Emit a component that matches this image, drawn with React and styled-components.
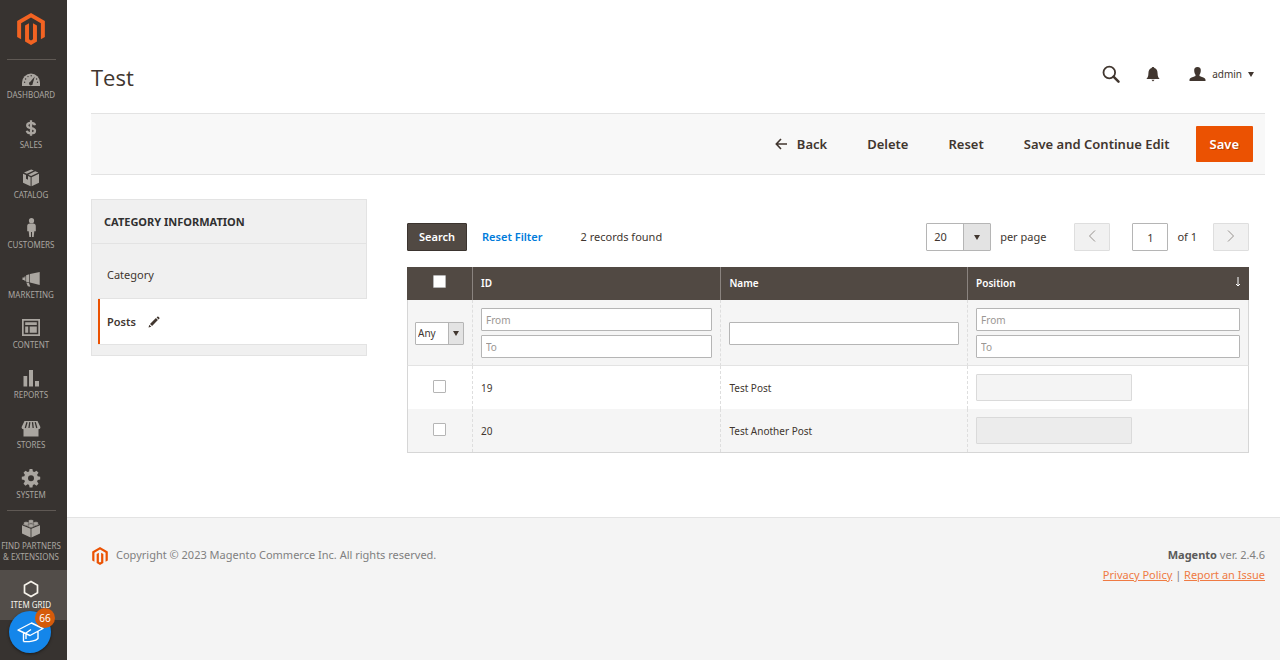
import React from "react";
import styled, { createGlobalStyle, css } from "styled-components";

const GlobalStyle = createGlobalStyle`
  *, *::before, *::after { box-sizing: border-box; }
  body {
    margin: 0;
    background: #fff;
    color: #41362f;
    font: 11px/16px "Noto Sans", "Open Sans", sans-serif;
  }
  button, input, select { font: inherit; color: inherit; border-radius: 1px; }
  button { cursor: pointer; }
`;

const Layout = styled.div`
  display: flex;
  min-height: 100vh;
`;

/* ---------- Side menu ---------- */

const Sidebar = styled.nav`
  flex: 0 0 67px;
  background: #373330;
`;

const LogoLink = styled.a`
  display: flex;
  justify-content: center;
  padding: 13px 5px 14px 0;
  color: #f26322;
  svg { display: block; }
`;

const Separator = styled.hr`
  height: 1px;
  margin: 0 11px 0 7px;
  border: 0;
  background: #5f5954;
`;

const MenuItem = styled.a`
  display: flex;
  flex-direction: column;
  align-items: center;
  min-height: 50px;
  padding: 8px 5px 8px 0;
  text-decoration: none;
  text-align: center;
  text-transform: uppercase;
  white-space: nowrap;
  font-size: 8px;
  line-height: 11px;
  color: ${(p) => (p.$active ? "#f7f3eb" : "#aaa6a0")};
  background: ${(p) => (p.$active ? "#524d49" : "transparent")};
  svg { display: block; margin-bottom: 1px; }
`;

const MenuLabel = styled.span`
  display: block;
`;

/* ---------- Page header ---------- */

const Main = styled.div`
  flex: 1;
  min-width: 0;
  display: flex;
  flex-direction: column;
`;

const Header = styled.header`
  display: flex;
  justify-content: space-between;
  align-items: flex-start;
  padding: 63px 26px 22px 24px;
`;

const Title = styled.h1`
  margin: 0;
  font-family: "Open Sans", "Noto Sans", sans-serif;
  font-size: 22px;
  line-height: 28px;
  font-weight: 400;
`;

const Tools = styled.div`
  display: flex;
  align-items: center;
  height: 22px;
`;

const ToolButton = styled.button`
  display: flex;
  align-items: center;
  gap: 6px;
  margin-left: ${(p) => p.$gap || 0}px;
  padding: 0;
  border: 0;
  background: none;
  font-size: 10px;
  color: #41362f;
`;

const ActionBar = styled.div`
  display: flex;
  justify-content: flex-end;
  align-items: center;
  gap: 12px;
  margin: 0 15px 0 24px;
  padding: 12px;
  background: #f8f8f8;
  border: solid #e3e3e3;
  border-width: 1px 0;
`;

const ActionButton = styled.button`
  display: flex;
  align-items: center;
  gap: 10px;
  height: 36px;
  padding: 0 14px;
  border: 0;
  background: none;
  font-size: 13px;
  font-weight: 600;
  ${(p) =>
    p.$primary &&
    css`
      background: #eb5202;
      color: #fff;
      text-shadow: 1px 1px 0 rgba(0, 0, 0, 0.25);
    `}
`;

/* ---------- Content ---------- */

const Content = styled.main`
  display: flex;
  align-items: flex-start;
  gap: 40px;
  padding: 24px 31px 64px 24px;
`;

const Aside = styled.aside`
  flex: 0 0 276px;
  padding-bottom: 10px;
  background: #f0f0f0;
  border: 1px solid #e3e3e3;
`;

const AsideTitle = styled.h2`
  margin: 0;
  padding: 14px 12px 13px;
  font-size: 11px;
  line-height: 16px;
  font-weight: 700;
  color: #303030;
  text-transform: uppercase;
  border-bottom: 1px solid #e3e3e3;
`;

const TabList = styled.div`
  padding: 8px 0 0 6px;
`;

const Tab = styled.a`
  display: flex;
  align-items: center;
  gap: 12px;
  height: ${(p) => (p.$active ? 47 : 46)}px;
  padding-left: 9px;
  color: #41362f;
  text-decoration: none;
  ${(p) =>
    p.$active &&
    css`
      margin-right: -1px;
      background: #fff;
      border: solid #e3e3e3;
      border-width: 1px 0;
      box-shadow: inset 2px 0 0 #eb5202;
      font-weight: 600;
    `}
`;

const Grid = styled.section`
  flex: 1;
  min-width: 0;
  padding-top: 24px;
`;

const Toolbar = styled.div`
  display: flex;
  align-items: center;
  height: 28px;
  margin-bottom: 16px;
`;

const SearchButton = styled.button`
  height: 28px;
  padding: 0 11px;
  border: 1px solid #3b342f;
  background: #514943;
  color: #fff;
  font-weight: 600;
`;

const LinkButton = styled.button`
  margin-left: 15px;
  padding: 0;
  border: 0;
  background: none;
  color: #007bdb;
  font-weight: 600;
`;

const Records = styled.span`
  margin-left: 38px;
`;

const Pager = styled.div`
  display: flex;
  align-items: center;
  margin-left: auto;
`;

const SelectBox = styled.span`
  position: relative;
  display: block;
  width: ${(p) => p.$width}px;
  select {
    display: block;
    width: 100%;
    height: ${(p) => p.$height}px;
    padding: 0 0 0 ${(p) => p.$pad}px;
    appearance: none;
    background: #fff;
    border: 1px solid #b5b5b5;
  }
`;

const SelectArrow = styled.span`
  position: absolute;
  top: 1px;
  right: 1px;
  bottom: 1px;
  width: ${(p) => p.$width}px;
  display: flex;
  align-items: center;
  justify-content: center;
  background: #e3e3e3;
  border-left: 1px solid #b5b5b5;
  pointer-events: none;
`;

const PerPage = styled.label`
  display: flex;
  align-items: center;
  gap: 9px;
  margin-right: 28px;
`;

const PageButton = styled.button`
  display: flex;
  align-items: center;
  justify-content: center;
  width: 36px;
  height: 28px;
  padding: 0 0 2px;
  border: 1px solid #dedede;
  background: #f1f1f1;
  color: #97928e;
`;

const PageLabel = styled.label`
  display: flex;
  align-items: center;
  gap: 9px;
  margin: 0 16px 0 22px;
  input {
    width: 36px;
    height: 28px;
    padding: 0;
    border: 1px solid #b5b5b5;
    text-align: center;
  }
`;

const Table = styled.table`
  width: 100%;
  table-layout: fixed;
  border-collapse: separate;
  border-spacing: 0;
  border-bottom: 1px solid #d6d6d6;
  font-size: 10px;
`;

const Col = styled.col`
  width: ${(p) => p.$width};
`;

const HeadCell = styled.th`
  height: 33px;
  padding: 0 8px 2px;
  background: #514943;
  color: #fff;
  text-align: ${(p) => (p.$center ? "center" : "left")};
  font-weight: 600;
  & + & { border-left: 1px solid #8a837f; }
`;

const HeadLabel = styled.span`
  display: flex;
  justify-content: space-between;
  align-items: center;
  svg { margin-bottom: 2px; }
`;

const Row = styled.tr`
  background: ${(p) => (p.$shade ? "#f5f5f5" : "#fff")};
`;

const Cell = styled.td`
  height: 43px;
  padding: 0 8px;
  text-align: ${(p) => (p.$center ? "center" : "left")};
  border-left: 1px dashed #dedede;
  &:first-child { padding-left: 7px; border-left: 1px solid #d6d6d6; }
  &:last-child { border-right: 1px solid #d6d6d6; }
`;

const FilterCell = styled(Cell)`
  height: 66px;
  padding: 8px 8px 7px;
  border-bottom: 1px solid #e3e3e3;
`;

const Stack = styled.div`
  display: grid;
  gap: 4px;
`;

const TextInput = styled.input`
  display: block;
  width: 100%;
  height: 23px;
  padding: 0 4px;
  background: #fff;
  border: 1px solid #b5b5b5;
  &::placeholder { color: #9b9793; opacity: 1; }
`;

const PositionInput = styled.input`
  display: block;
  width: 156px;
  height: 27px;
  padding: 0 8px;
  border: 1px solid #dadada;
  background: ${(p) => (p.$shade ? "#ececec" : "#f4f4f4")};
`;

const Checkbox = styled.input`
  display: block;
  width: 13px;
  height: 13px;
  margin: 0 auto 2px;
  appearance: none;
  background: #fff;
  border: 1px solid #b5b5b5;
  &:checked { background: #514943; }
`;

/* ---------- Footer ---------- */

const Footer = styled.footer`
  flex: 1;
  display: flex;
  justify-content: space-between;
  align-items: flex-start;
  padding: 27px 15px 64px 24px;
  background: #f4f4f4;
  border-top: 1px solid #e3e3e3;
  line-height: 20px;
  color: #808080;
`;

const Copyright = styled.div`
  display: flex;
  gap: 7px;
  svg { display: block; margin-top: 2px; color: #eb5202; }
`;

const Version = styled.div`
  text-align: right;
  strong { color: #5a5a5a; font-weight: 700; }
  a { color: #ef7a43; text-decoration: underline; }
`;

/* ---------- Guide launcher ---------- */

const Guide = styled.button`
  position: fixed;
  left: 9px;
  bottom: 7px;
  display: flex;
  align-items: center;
  justify-content: center;
  width: 42px;
  height: 42px;
  padding: 0;
  border: 0;
  border-radius: 50%;
  background: #1486ea;
  color: #fff;
  box-shadow: 0 1px 3px rgba(0, 0, 0, 0.5);
`;

const Badge = styled.span`
  position: absolute;
  top: -3px;
  right: -4px;
  width: 20px;
  height: 20px;
  border-radius: 50%;
  background: #d55b0b;
  font-size: 10px;
  line-height: 20px;
`;

/* ---------- Icons ---------- */

const Icon = ({ size = 20, w, h, box, children }) => (
  <svg width={w || size} height={h || size} viewBox={box || `0 0 ${w || size} ${h || size}`} fill="currentColor" aria-hidden="true">
    {children}
  </svg>
);

const MagentoLogo = ({ size }) => (
  <Icon size={size} box="0 0 24 24">
    <path d="M12 24l-4.455-2.572v-12l2.97-1.715v12.001l1.485.902 1.485-.902V7.713l2.971 1.715v12L12 24zM22.391 6v12l-2.969 1.714V7.713L12 3.43 4.574 7.713v12.001L1.609 18V6L12 0l10.391 6z" />
  </Icon>
);

const Caret = () => (
  <Icon w={6} h={5}>
    <path d="M0 0h6L3 5z" />
  </Icon>
);

const dark = "#373330";

const icons = {
  dashboard: (
    <Icon>
      <path d="M1 18v-3.500a9 9 0 0 1 18 0V18z" />
      <g fill={dark}>
        <path d="M13.800 8.500l-2 6.800a1.900 1.900 0 1 1-2.500-1.600z" />
        <circle cx="3.600" cy="14.300" r=".7" />
        <circle cx="4.600" cy="11" r=".7" />
        <circle cx="7" cy="8.600" r=".7" />
        <circle cx="10.200" cy="7.800" r=".7" />
        <circle cx="15.600" cy="11" r=".7" />
        <circle cx="16.500" cy="14.300" r=".7" />
      </g>
    </Icon>
  ),
  sales: (
    <Icon>
      <path
        d="M14 7.200C13.600 5.500 12 4.800 10 4.800c-2.300 0-3.800 1-3.800 2.600 0 3.800 7.800 1.600 7.800 5.300 0 1.700-1.500 2.700-4 2.700-2.200 0-3.800-.9-4.200-2.700M10 2.200v15.600"
        fill="none"
        stroke="currentColor"
        strokeWidth="2.300"
      />
    </Icon>
  ),
  catalog: (
    <Icon>
      <path d="M10.200 1.500l2.600 1.100-6.900 3.200-2.900-1.200zM14.200 3.200l3.200 1.400L10.100 8 7.200 6.800zM2 5.800l3 1.300v3.700l2 .9V8l2.600 1.200v9.100L2 14.800zM18 5.800v9l-7.400 3.500V9.200z" />
    </Icon>
  ),
  customers: (
    <Icon>
      <circle cx="10.500" cy="2.700" r="2.600" />
      <path d="M8.800 5.500h3.400c1.600 0 2.600 1 2.600 2.800v5h-1.500L12.700 19H11v-5h-1v5H8.300l-.6-5.700H6.200v-5c0-1.800 1-2.800 2.600-2.800z" />
    </Icon>
  ),
  marketing: (
    <Icon>
      <path d="M18.700 4v13L9 14.600V6zM8.300 6.200v8.200l-3.200-.6V7.200zM4.500 8.200v5l-1-.3V12H1.500V9.500h2V8.400zM5.300 14.500l2.700.5 1.300 3.700-2.500-.4z" />
    </Icon>
  ),
  content: (
    <Icon>
      <path fillRule="evenodd" d="M1 1h18v17H1zM2.700 2.700v13.600h14.600V2.700zM4.200 4.200h11.600V7H4.200zM4.200 8.600h3v6.200h-3zM8.700 8.600h7.100v6.200H8.700z" />
    </Icon>
  ),
  reports: (
    <Icon>
      <path d="M2.500 8h3.700v10.500H2.500zM8 2h4v16.500H8zM14 13h4v5.500h-4z" />
    </Icon>
  ),
  stores: (
    <Icon>
      <path d="M3.500 3h13l2.900 6c0 1.500-.7 2.200-1.900 2.200V18.500h-15v-7.300C1.300 11.200.6 10.500.6 9z" />
      <path d="M6 4.200L4.300 10M8.800 4.200L8 10M11.500 4.200l.7 5.800M14.200 4.200l1.600 5.800" stroke={dark} strokeWidth="1.300" />
    </Icon>
  ),
  system: (
    <Icon>
      <path
        fillRule="evenodd"
        d="M8.600 1h2.800l.5 2.500 1.500.6 2.100-1.400 2 2-1.400 2.100.6 1.500 2.500.5v2.800l-2.500.5-.6 1.500 1.400 2.100-2 2-2.100-1.400-1.500.6-.5 2.500H8.600l-.5-2.500-1.500-.6-2.100 1.400-2-2 1.400-2.100-.6-1.500L.8 11.600V8.800l2.500-.5.6-1.500-1.400-2.100 2-2 2.100 1.400 1.500-.6zM10 7.200a3 3 0 1 0 0 6 3 3 0 0 0 0-6z"
      />
    </Icon>
  ),
  partners: (
    <Icon>
      <path d="M1 6.200l8.600 3.600v8.700L1 14.600zM19 6.200v8.400l-8.600 3.900V9.800zM1.800 5.300L10 2l8.200 3.300L10 8.800z" />
      <g stroke={dark} strokeWidth=".4">
        <path d="M7.600 1.600v1.800c0 1.300 4.800 1.300 4.800 0V1.600c0-1.300-4.800-1.300-4.800 0zM2.800 3.700v1.700c0 1.300 4.600 1.300 4.600 0V3.700c0-1.200-4.600-1.200-4.600 0zM12.600 3.700v1.700c0 1.300 4.600 1.300 4.600 0V3.700c0-1.200-4.600-1.200-4.600 0zM7.700 5.800v1.700c0 1.300 4.600 1.300 4.600 0V5.800c0-1.300-4.600-1.300-4.600 0z" />
      </g>
    </Icon>
  ),
  hexagon: (
    <Icon>
      <path d="M10 3.600l6.500 3.700v7.500L10 18.500l-6.500-3.700V7.300z" fill="none" stroke="currentColor" strokeWidth="1.700" />
    </Icon>
  ),
};

const menu = [
  ["dashboard", "Dashboard"],
  ["sales", "Sales"],
  ["catalog", "Catalog"],
  ["customers", "Customers"],
  ["marketing", "Marketing"],
  ["content", "Content"],
  ["reports", "Reports"],
  ["stores", "Stores"],
  ["system", "System"],
];

const posts = [
  { id: 19, name: "Test Post" },
  { id: 20, name: "Test Another Post" },
];

const RangeFilter = ({ label }) => (
  <Stack>
    <TextInput placeholder="From" aria-label={`${label} from`} />
    <TextInput placeholder="To" aria-label={`${label} to`} />
  </Stack>
);

export default function App() {
  return (
    <Layout>
      <GlobalStyle />
      <Sidebar>
        <LogoLink href="#" aria-label="Magento">
          <MagentoLogo size={32} />
        </LogoLink>
        <Separator />
        {menu.map(([icon, label]) => (
          <MenuItem href="#" key={icon}>
            {icons[icon]}
            <MenuLabel>{label}</MenuLabel>
          </MenuItem>
        ))}
        <Separator />
        <MenuItem href="#">
          {icons.partners}
          <MenuLabel>
            Find Partners
            <br />& Extensions
          </MenuLabel>
        </MenuItem>
        <MenuItem href="#" $active>
          {icons.hexagon}
          <MenuLabel>Item Grid</MenuLabel>
        </MenuItem>
      </Sidebar>

      <Main>
        <Header>
          <Title>Test</Title>
          <Tools>
            <ToolButton aria-label="Search">
              <Icon size={18}>
                <circle cx="7.300" cy="7.500" r="5.800" fill="none" stroke="currentColor" strokeWidth="1.800" />
                <path d="M11.500 11.700l5 5" stroke="currentColor" strokeWidth="2.400" strokeLinecap="round" />
              </Icon>
            </ToolButton>
            <ToolButton aria-label="Notifications" $gap={26}>
              <Icon w={14} h={16}>
                <path d="M7 1c.8 0 1.300.4 1.400 1.100C10.800 2.800 11.500 5 11.600 7.500c.1 2.500.4 3.700 2 5.500H.4c1.600-1.800 1.900-3 2-5.500C2.500 5 3.200 2.800 5.600 2.100 5.700 1.400 6.200 1 7 1zM5.400 13.800h3.200L7 15.600z" />
              </Icon>
            </ToolButton>
            <ToolButton $gap={29}>
              <Icon size={17}>
                <path d="M8.500 1c2.300 0 3.500 1.200 3.300 3.800-.1 1.800-.6 3.100-1.300 4v1.200c1 .9 6 1.300 6 3.700V15H.5v-1.300c0-2.400 5-2.800 6-3.700V8.800c-.7-.9-1.200-2.200-1.300-4C5 2.200 6.200 1 8.500 1z" />
              </Icon>
              <span>admin</span>
              <Caret />
            </ToolButton>
          </Tools>
        </Header>

        <ActionBar>
          <ActionButton>
            <Icon w={12} h={12}>
              <path d="M6 1L1.300 6 6 11M1.500 6H12" fill="none" stroke="currentColor" strokeWidth="1.600" />
            </Icon>
            Back
          </ActionButton>
          <ActionButton>Delete</ActionButton>
          <ActionButton>Reset</ActionButton>
          <ActionButton>Save and Continue Edit</ActionButton>
          <ActionButton $primary>Save</ActionButton>
        </ActionBar>

        <Content>
          <Aside>
            <AsideTitle>Category Information</AsideTitle>
            <TabList>
              <Tab href="#">Category</Tab>
              <Tab href="#" $active>
                Posts
                <Icon size={12}>
                  <path d="M.5 11.500l.8-2.700L3.300 10.700zM2 7.900L7.900 2.100l2 2L4.100 10zM8.600 1.400L9.600.5c.5-.5 2.400 1.400 1.900 1.900l-.9 1z" />
                </Icon>
              </Tab>
            </TabList>
          </Aside>

          <Grid>
            <Toolbar>
              <SearchButton>Search</SearchButton>
              <LinkButton>Reset Filter</LinkButton>
              <Records>2 records found</Records>
              <Pager>
                <PerPage>
                  <SelectBox $width={65} $height={28} $pad={7}>
                    <select defaultValue="20">
                      <option>20</option>
                      <option>50</option>
                    </select>
                    <SelectArrow $width={27}>
                      <Caret />
                    </SelectArrow>
                  </SelectBox>
                  per page
                </PerPage>
                <PageButton aria-label="Previous page">
                  <Icon w={8} h={14}>
                    <path d="M7 1.500L1.500 7 7 12.500" fill="none" stroke="currentColor" />
                  </Icon>
                </PageButton>
                <PageLabel>
                  <input defaultValue="1" aria-label="Page" />
                  of 1
                </PageLabel>
                <PageButton aria-label="Next page">
                  <Icon w={8} h={14}>
                    <path d="M1 1.500L6.500 7 1 12.500" fill="none" stroke="currentColor" />
                  </Icon>
                </PageButton>
              </Pager>
            </Toolbar>

            <Table>
              <colgroup>
                <Col $width="65px" />
                <Col $width="29.500%" />
                <Col $width="29.300%" />
                <Col />
              </colgroup>
              <thead>
                <tr>
                  <HeadCell $center>
                    <Checkbox type="checkbox" aria-label="Select all" />
                  </HeadCell>
                  <HeadCell>ID</HeadCell>
                  <HeadCell>Name</HeadCell>
                  <HeadCell>
                    <HeadLabel>
                      Position
                      <Icon w={6} h={14}>
                        <path d="M3 2v9M1 9l2 2 2-2" fill="none" stroke="currentColor" />
                      </Icon>
                    </HeadLabel>
                  </HeadCell>
                </tr>
              </thead>
              <tbody>
                <Row $shade>
                  <FilterCell>
                    <SelectBox $width={49} $height={23} $pad={2}>
                      <select aria-label="Selection" defaultValue="Any">
                        <option>Any</option>
                        <option>Yes</option>
                        <option>No</option>
                      </select>
                      <SelectArrow $width={15}>
                        <Caret />
                      </SelectArrow>
                    </SelectBox>
                  </FilterCell>
                  <FilterCell>
                    <RangeFilter label="ID" />
                  </FilterCell>
                  <FilterCell>
                    <TextInput aria-label="Name" />
                  </FilterCell>
                  <FilterCell>
                    <RangeFilter label="Position" />
                  </FilterCell>
                </Row>
                {posts.map((post, i) => (
                  <Row key={post.id} $shade={i % 2 === 1}>
                    <Cell $center>
                      <Checkbox type="checkbox" aria-label={`Select ${post.name}`} />
                    </Cell>
                    <Cell>{post.id}</Cell>
                    <Cell>{post.name}</Cell>
                    <Cell>
                      <PositionInput disabled $shade={i % 2 === 1} aria-label={`Position of ${post.name}`} />
                    </Cell>
                  </Row>
                ))}
              </tbody>
            </Table>
          </Grid>
        </Content>

        <Footer>
          <Copyright>
            <MagentoLogo size={18} />
            Copyright © 2023 Magento Commerce Inc. All rights reserved.
          </Copyright>
          <Version>
            <strong>Magento</strong> ver. 2.4.6
            <br />
            <a href="#">Privacy Policy</a> | <a href="#">Report an Issue</a>
          </Version>
        </Footer>
      </Main>

      <Guide aria-label="Guides">
        <Icon w={28} h={24}>
          <path
            d="M2 10L15.500 3 27 8.500 14 15.500zM7.500 13v8.500M7.500 21.500C13 22 20 21 22 18.500v-7M15 9.500l-5 3.500v6"
            fill="none"
            stroke="currentColor"
            strokeWidth="1.400"
            strokeLinejoin="round"
          />
        </Icon>
        <Badge>66</Badge>
      </Guide>
    </Layout>
  );
}
